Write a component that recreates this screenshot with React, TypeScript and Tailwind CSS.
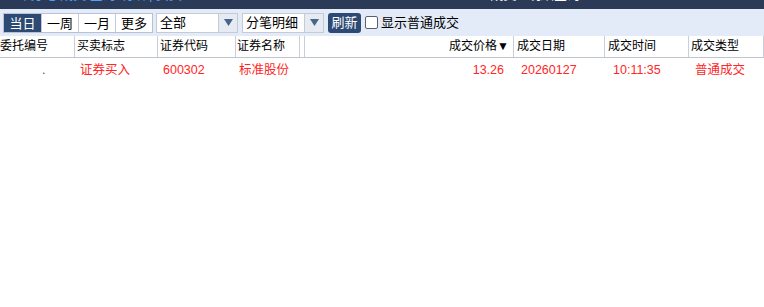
import React from 'react'

const FONT = { fontFamily: '"Liberation Sans", "Noto Sans CJK SC", sans-serif' }

type Col = { label: string; w: string; align?: 'right'; head: string; cell: string }

const COLS: Col[] = [
  { label: '委托编号', w: 'w-[75px]', head: 'pl-0', cell: 'pl-[42px]' },
  { label: '买卖标志', w: 'w-[83px]', head: 'pl-[2px]', cell: 'pl-[5px]' },
  { label: '证券代码', w: 'w-[78px]', head: 'pl-[2px]', cell: 'pl-[5px]' },
  { label: '证券名称', w: 'w-[64px]', head: 'pl-[1px]', cell: 'pl-[3px]' },
  { label: '', w: 'w-[5px]', head: '', cell: '' },
  { label: '成交价格▼', w: 'w-[209px]', align: 'right', head: 'pr-[4px]', cell: 'pr-[10px]' },
  { label: '成交日期', w: 'w-[91px]', head: 'pl-[3px]', cell: 'pl-[7px]' },
  { label: '成交时间', w: 'w-[84px]', head: 'pl-[3px]', cell: 'pl-[8px]' },
  { label: '成交类型', w: 'flex-1', head: 'pl-[2px]', cell: 'pl-[6px]' },
]

const ROW = ['.', '证券买入', '600302', '标准股份', '', '13.26', '20260127', '10:11:35', '普通成交']

function Select({ value, width }: { value: string; width: string }) {
  return (
    <div className={`flex h-[20px] ${width} border border-[#c5cbd6] bg-white`}>
      <span className="flex-1 pl-[3px] text-[13px] leading-[18px] text-black">{value}</span>
      <span className="flex w-[19px] items-center justify-center border-l border-[#c5cbd6] bg-[#e6eaf1]">
        <svg width="9" height="7" viewBox="0 0 9 7"><path d="M0 0h9L4.5 7z" fill="#4a6490" /></svg>
      </span>
    </div>
  )
}

export default function App() {
  return (
    <div className="h-[307px] w-[764px] overflow-hidden bg-white" style={FONT}>
      <div className="h-[9px] overflow-hidden bg-[#2b3b57]">
        <div className="-mt-[14px] flex text-[13px] leading-[18px]">
          <span className="pl-[14px] text-[#4aa3ff]">◀ 分笔 成交 查询 明细 | 买卖</span>
          <span className="ml-auto pr-[184px] text-white">成交 · 明细查询</span>
        </div>
      </div>
      <div className="flex h-[27px] items-center bg-[#e4ebf8] pl-[3px] text-[13px]">
        <div className="flex h-[20px] border border-[#b8c2d3] bg-white">
          <button className="w-[37px] bg-[#2d4a75] text-white">当日</button>
          <button className="w-[37px] border-l border-[#c5cbd6]">一周</button>
          <button className="w-[37px] border-l border-[#c5cbd6]">一月</button>
          <button className="w-[37px] border-l border-[#c5cbd6]">更多</button>
        </div>
        <div className="ml-[3px]"><Select value="全部" width="w-[82px]" /></div>
        <div className="ml-[4px]"><Select value="分笔明细" width="w-[82px]" /></div>
        <button className="ml-[4px] h-[20px] w-[33px] rounded-[3px] bg-[#2d4a75] text-white">刷新</button>
        <label className="ml-[4px] flex items-center gap-[3px]">
          <span className="h-[13px] w-[13px] rounded-[2px] border border-[#5a6070] bg-white" />
          <span className="text-[13px] text-black">显示普通成交</span>
        </label>
      </div>
      <div className="flex h-[22px] border-b border-[#c0c4cc] text-[12px] leading-[21px] text-black">
        {COLS.map((c, i) => (
          <div key={i} className={`${c.w} ${c.head} shrink-0 whitespace-nowrap border-r border-[#c8cfdc] ${c.align === 'right' ? 'text-right' : ''}`}>
            {c.label}
          </div>
        ))}
      </div>
      <div className="flex h-[23px] text-[12.5px] leading-[25px] text-[#ff2626]">
        {COLS.map((c, i) => (
          <div key={i} className={`${c.w} ${c.cell} shrink-0 whitespace-nowrap ${c.align === 'right' ? 'text-right' : ''} ${i === 0 ? 'text-[#555]' : ''}`}>
            {ROW[i]}
          </div>
        ))}
      </div>
    </div>
  )
}
